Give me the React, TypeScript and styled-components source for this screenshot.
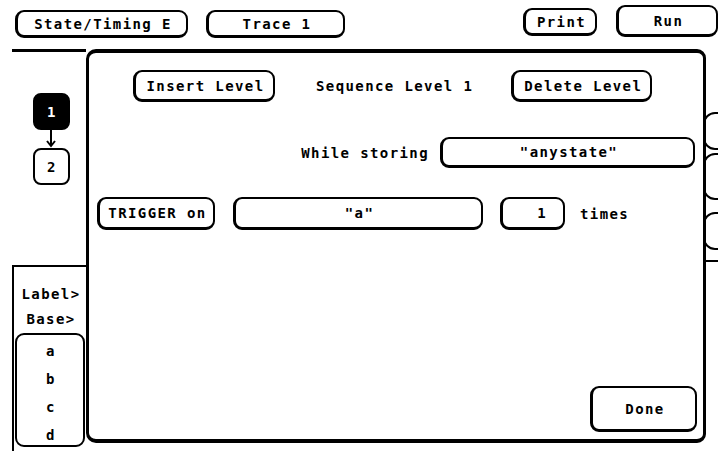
import React from 'react';
import styled, { createGlobalStyle } from 'styled-components';

const GlobalStyle = createGlobalStyle`
  html, body {
    margin: 0;
    padding: 0;
    background: #fff;
  }
  body {
    font-family: 'DejaVu Sans Mono', 'Liberation Mono', monospace;
  }
`;

const Screen = styled.div`
  width: 718px;
  height: 451px;
  overflow: hidden;
  background: #fff;
  color: #000;
  display: flex;
  flex-direction: column;
  font-family: 'DejaVu Sans Mono', 'Liberation Mono', monospace;
  font-weight: bold;
  font-size: 14px;
  letter-spacing: 1.4px;
`;

const TopBar = styled.div`
  height: 49px;
  flex: none;
  display: flex;
  justify-content: space-between;
  align-items: flex-start;
  padding-left: 15px;
`;

const KeyGroup = styled.div<{ $gap: number }>`
  display: flex;
  align-items: flex-start;
  gap: ${p => p.$gap}px;
`;

const Key = styled.div<{ $w: number; $h?: number; $top?: number; $pr?: number }>`
  box-sizing: border-box;
  flex: none;
  width: ${p => p.$w}px;
  height: ${p => p.$h ?? 32}px;
  margin-top: ${p => p.$top ?? 0}px;
  border: 2px solid #000;
  border-left-width: 3px;
  border-bottom-width: 3px;
  border-radius: 9px;
  display: flex;
  align-items: center;
  justify-content: ${p => (p.$pr ? 'flex-end' : 'center')};
  padding-right: ${p => p.$pr ?? 0}px;
  padding-left: 2px;
  white-space: nowrap;
`;

const Body = styled.div`
  flex: 1;
  min-height: 0;
  display: flex;
`;

const LeftColumn = styled.div`
  flex: none;
  width: 74px;
  margin-left: 12px;
  border-top: 3px solid #000;
  display: flex;
  flex-direction: column;
`;

const LevelStack = styled.div`
  margin-top: 41px;
  padding-left: 4px;
  display: flex;
  flex-direction: column;
  align-items: center;
`;

const LevelBox = styled.div<{ $active?: boolean }>`
  box-sizing: border-box;
  width: 37px;
  height: 37px;
  border: 2px solid #000;
  border-radius: 8px;
  background: ${p => (p.$active ? '#000' : '#fff')};
  color: ${p => (p.$active ? '#fff' : '#000')};
  display: flex;
  align-items: center;
  justify-content: center;
  padding-left: 2px;
`;

const LabelBox = styled.div`
  box-sizing: border-box;
  margin-top: auto;
  height: 186px;
  border-top: 2px solid #000;
  border-left: 2px solid #000;
  padding-top: 14px;
  display: flex;
  flex-direction: column;
`;

const LabelRow = styled.div<{ $h: number }>`
  height: ${p => p.$h}px;
  display: flex;
  align-items: center;
  justify-content: center;
  padding-left: 2px;
`;

const LabelList = styled.div`
  box-sizing: border-box;
  margin: 2px 1px 0 1px;
  height: 114px;
  border: 2px solid #000;
  border-radius: 9px;
  padding-top: 2px;
`;

const Panel = styled.div`
  box-sizing: border-box;
  flex: 1;
  height: 394px;
  border: 3px solid #000;
  border-top-width: 4px;
  border-bottom-width: 4px;
  border-radius: 10px 9px 9px 10px;
  display: flex;
  flex-direction: column;
`;

const Row = styled.div<{ $top: number; $pl?: number; $pr?: number; $end?: boolean }>`
  margin-top: ${p => p.$top}px;
  padding-left: ${p => p.$pl ?? 0}px;
  padding-right: ${p => p.$pr ?? 0}px;
  display: flex;
  align-items: center;
  justify-content: ${p => (p.$end ? 'flex-end' : 'flex-start')};
`;

const Gap = styled.span<{ $w: number }>`
  flex: none;
  width: ${p => p.$w}px;
`;

const Caption = styled.span`
  white-space: nowrap;
`;

const DoneKey = styled(Key)`
  margin-top: auto;
  align-self: flex-end;
  margin-right: 6px;
  margin-bottom: 7px;
`;

const RightStrip = styled.div`
  flex: none;
  width: 12px;
  padding-top: 63px;
  display: flex;
  flex-direction: column;
`;

const CutKey = styled.div<{ $h: number; $top: number }>`
  box-sizing: border-box;
  flex: none;
  width: 40px;
  height: ${p => p.$h}px;
  margin-top: ${p => p.$top}px;
  margin-left: -3px;
  border: 2px solid #000;
  border-radius: 12px;
`;

const StripRule = styled.div`
  margin-top: 10px;
  margin-left: -2px;
  width: 20px;
  border-top: 2px solid #000;
`;

const Arrow = () => (
  <svg width="12" height="18" viewBox="0 0 12 18">
    <line x1="6" y1="0" x2="6" y2="16" stroke="#000" strokeWidth="2" />
    <polyline points="2,11 6,16 10,11" fill="none" stroke="#000" strokeWidth="2" />
  </svg>
);

export default function App() {
  return (
    <>
      <GlobalStyle />
      <Screen>
        <TopBar>
          <KeyGroup $gap={18}>
            <Key $w={173} $h={28} $top={10}>State/Timing E</Key>
            <Key $w={139} $h={28} $top={10}>Trace 1</Key>
          </KeyGroup>
          <KeyGroup $gap={19}>
            <Key $w={74} $h={28} $top={8}>Print</Key>
            <Key $w={102} $h={32} $top={5}>Run</Key>
          </KeyGroup>
        </TopBar>
        <Body>
          <LeftColumn>
            <LevelStack>
              <LevelBox $active>1</LevelBox>
              <Arrow />
              <LevelBox>2</LevelBox>
            </LevelStack>
            <LabelBox>
              <LabelRow $h={25}>Label&gt;</LabelRow>
              <LabelRow $h={25}>Base&gt;</LabelRow>
              <LabelList>
                {['a', 'b', 'c', 'd'].map(l => (
                  <LabelRow key={l} $h={28}>{l}</LabelRow>
                ))}
              </LabelList>
            </LabelBox>
          </LeftColumn>
          <Panel>
            <Row $top={17} $pl={44}>
              <Key $w={142}>Insert Level</Key>
              <Gap $w={41} />
              <Caption>Sequence Level 1</Caption>
              <Gap $w={38} />
              <Key $w={141}>Delete Level</Key>
            </Row>
            <Row $top={35} $pr={8} $end>
              <Caption>While storing</Caption>
              <Gap $w={11} />
              <Key $w={255} $h={31}>"anystate"</Key>
            </Row>
            <Row $top={29} $pl={8}>
              <Key $w={118} $h={33}>TRIGGER on</Key>
              <Gap $w={18} />
              <Key $w={250} $h={33}>"a"</Key>
              <Gap $w={17} />
              <Key $w={65} $h={33} $pr={16}>1</Key>
              <Gap $w={15} />
              <Caption>times</Caption>
            </Row>
            <DoneKey $w={107} $h={46}>Done</DoneKey>
          </Panel>
          <RightStrip>
            <CutKey $h={38} $top={0} />
            <CutKey $h={47} $top={3} />
            <CutKey $h={38} $top={12} />
            <StripRule />
          </RightStrip>
        </Body>
      </Screen>
    </>
  );
}
